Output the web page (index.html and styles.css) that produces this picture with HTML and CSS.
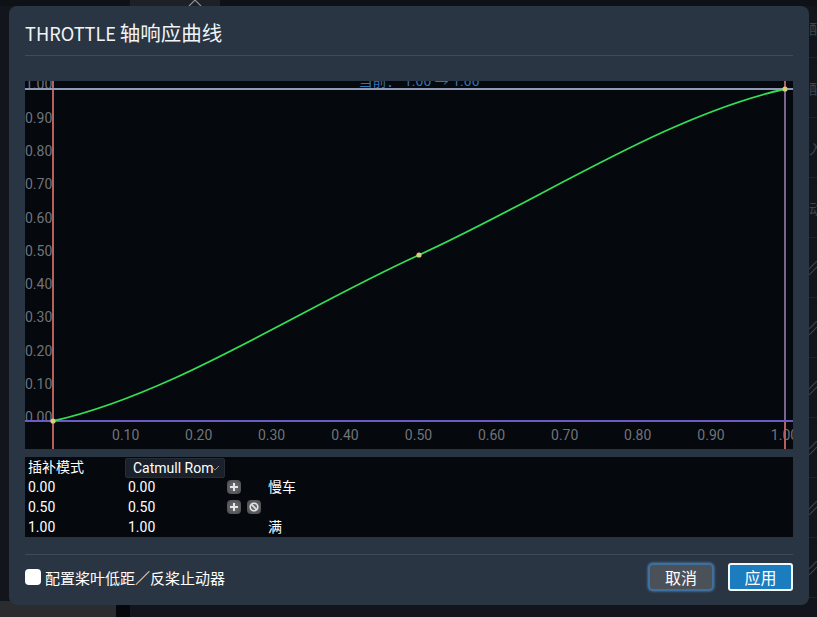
FILE: index.html
```html
<!DOCTYPE html>
<html lang="zh">
<head>
    <meta charset="UTF-8">
    <meta name="viewport" content="width=device-width, initial-scale=1.0">
    <title>THROTTLE 轴响应曲线</title>
    <link rel="stylesheet" href="styles.css">
</head>
<body>
    <div class="page">
        <div class="top-strip">
            <div class="top-tab">
                <svg class="caret" width="14" height="7" viewBox="0 0 14 7"><path d="M1 7 L7 1 L13 7" fill="none" stroke="#8b8f96" stroke-width="1.2"/></svg>
            </div>
        </div>
        <div class="side-rows">
            <div class="side-row"><span>配置</span></div>
            <div class="side-row"><span>配置</span></div>
            <div class="side-row"><span>入口</span></div>
            <div class="side-row"><span>动作</span></div>
            <div class="side-row"><svg width="10" height="14" viewBox="0 0 10 14"><path d="M0 8 L8 0 M0 14 L10 4" stroke="#3d4249" stroke-width="1.2"/></svg></div>
            <div class="side-row"><svg width="10" height="14" viewBox="0 0 10 14"><path d="M0 8 L8 0 M0 14 L10 4" stroke="#3d4249" stroke-width="1.2"/></svg></div>
            <div class="side-row"><svg width="10" height="14" viewBox="0 0 10 14"><path d="M0 8 L8 0 M0 14 L10 4" stroke="#3d4249" stroke-width="1.2"/></svg></div>
            <div class="side-row"><svg width="10" height="14" viewBox="0 0 10 14"><path d="M0 8 L8 0 M0 14 L10 4" stroke="#3d4249" stroke-width="1.2"/></svg></div>
            <div class="side-row"><svg width="10" height="14" viewBox="0 0 10 14"><path d="M0 8 L8 0 M0 14 L10 4" stroke="#3d4249" stroke-width="1.2"/></svg></div>
            <div class="side-row"><svg width="10" height="14" viewBox="0 0 10 14"><path d="M0 8 L8 0 M0 14 L10 4" stroke="#3d4249" stroke-width="1.2"/></svg></div>
        </div>
        <div class="bottom-left"></div>
        <div class="bottom-gap"></div>
    </div>

    <div class="modal">
        <div class="modal-title"><span class="title-axis">THROTTLE</span> 轴响应曲线</div>
        <div class="divider"></div>

        <svg class="plot" width="768" height="368" viewBox="25 81 768 368">
            <rect x="25" y="81" width="768" height="368" fill="#05080d"/>

            <g class="tick-y">
                <text x="25" y="89">1.00</text>
                <text x="25" y="123">0.90</text>
                <text x="25" y="156">0.80</text>
                <text x="25" y="189">0.70</text>
                <text x="25" y="223">0.60</text>
                <text x="25" y="256">0.50</text>
                <text x="25" y="289">0.40</text>
                <text x="25" y="322">0.30</text>
                <text x="25" y="356">0.20</text>
                <text x="25" y="389">0.10</text>
                <text x="25" y="422">0.00</text>
            </g>
            <g class="tick-x">
                <text x="125.7" y="440">0.10</text>
                <text x="198.7" y="440">0.20</text>
                <text x="271.6" y="440">0.30</text>
                <text x="345" y="440">0.40</text>
                <text x="418.5" y="440">0.50</text>
                <text x="491.6" y="440">0.60</text>
                <text x="564.7" y="440">0.70</text>
                <text x="637.7" y="440">0.80</text>
                <text x="711" y="440">0.90</text>
                <text x="784.5" y="440">1.00</text>
            </g>
            <text class="current" x="419" y="86">当前： 1.00 → 1.00</text>

            <path d="M53 81 V449" stroke="#b4605f" stroke-width="2"/>
            <path d="M785 81 V449" stroke="#b4605f" stroke-width="2"/>
            <path d="M785 89 V421" stroke="#7b6390" stroke-width="2"/>
            <path d="M25 89 H793" stroke="#8f9bb5" stroke-width="2"/>
            <path d="M25 421 H793" stroke="#6a5cc4" stroke-width="2"/>

            <path d="M53 421 C175 393.3 297 310.3 419 255 C541 199.7 663 116.7 785 89" fill="none" stroke="#33de55" stroke-width="1.8"/>

            <circle cx="53" cy="421" r="2.6" fill="#d8cf7c"/>
            <circle cx="419" cy="255" r="2.6" fill="#d8cf7c"/>
            <circle cx="785" cy="89" r="2.6" fill="#d8cf7c"/>
        </svg>

        <div class="points">
            <div class="cell">插补模式</div>
            <div class="select">Catmull Rom<svg class="chevron" width="8" height="6" viewBox="0 0 8 6"><path d="M1 3 L3 5 L7 1" fill="none" stroke="#8a8f96" stroke-width="1"/></svg></div>
            <div></div>
            <div></div>

            <div class="cell">0.00</div>
            <div class="cell">0.00</div>
            <div class="tools">
                <span class="tool"><svg width="10" height="10" viewBox="0 0 10 10"><path d="M5 1 V9 M1 5 H9" stroke="#e4e4e4" stroke-width="2"/></svg></span>
            </div>
            <div class="cell note">慢车</div>

            <div class="cell">0.50</div>
            <div class="cell">0.50</div>
            <div class="tools">
                <span class="tool"><svg width="10" height="10" viewBox="0 0 10 10"><path d="M5 1 V9 M1 5 H9" stroke="#e4e4e4" stroke-width="2"/></svg></span>
                <span class="tool"><svg width="10" height="10" viewBox="0 0 10 10"><circle cx="5" cy="5" r="3.8" fill="none" stroke="#e4e4e4" stroke-width="1.6"/><path d="M2.4 2.4 L7.6 7.6" stroke="#e4e4e4" stroke-width="1.6"/></svg></span>
            </div>
            <div></div>

            <div class="cell">1.00</div>
            <div class="cell">1.00</div>
            <div></div>
            <div class="cell note">满</div>
        </div>

        <div class="divider footer-line"></div>

        <div class="footer">
            <span class="checkbox"></span>
            <span class="check-label">配置桨叶低距／反桨止动器</span>
            <button class="btn btn-cancel">取消</button>
            <button class="btn btn-apply">应用</button>
        </div>
    </div>
</body>
</html>
```

FILE: styles.css
```css
html, body {
    margin: 0;
    height: 100%;
    overflow: hidden;
}
body {
    font-family: Roboto, "Noto Sans CJK SC", sans-serif;
    background-color: #05070b;
    color: #fff;
}
.page {
    position: relative;
    width: 817px;
    height: 617px;
    background-color: #12161c;
    overflow: hidden;
}
.top-strip {
    height: 6px;
    background-color: #0e1116;
}
.top-tab {
    width: 90px;
    height: 6px;
    margin-left: 130px;
    background-color: #1d2025;
    display: flex;
    justify-content: center;
}
.caret {
    margin-left: 40px;
    margin-top: -1px;
}
.side-rows {
    position: absolute;
    left: 809px;
    top: -2px;
    width: 8px;
    overflow: hidden;
}
.side-row {
    height: 59px;
    border-bottom: 1px solid #20242a;
    display: flex;
    align-items: center;
    font-size: 14px;
    color: #3f444b;
    white-space: nowrap;
}
.side-row svg {
    flex: none;
}
.bottom-left {
    position: absolute;
    left: 0;
    bottom: 0;
    width: 116px;
    height: 16px;
    background-color: #2a2c30;
}
.bottom-gap {
    position: absolute;
    left: 116px;
    bottom: 0;
    width: 14px;
    height: 16px;
    background-color: #05070c;
}

.modal {
    position: absolute;
    left: 9px;
    top: 6px;
    width: 768px;
    height: 567px;
    padding: 16px;
    border-radius: 8px;
    background-color: #2a3543;
}
.modal-title {
    font-family: "Noto Sans CJK SC", sans-serif;
    font-size: 20.5px;
    line-height: 21px;
    height: 22px;
    word-spacing: -1px;
    color: #f2f4f6;
    margin-bottom: 11px;
}
.title-axis {
    font-size: 18.2px;
    line-height: 20px;
}
.divider {
    height: 1px;
    background-color: #414b58;
}
.plot {
    display: block;
    margin-top: 25px;
}
.tick-y text, .tick-x text {
    font-size: 14px;
    fill: #6f747a;
}
.tick-x text {
    text-anchor: middle;
}
.current {
    font-size: 14px;
    fill: #2f74b5;
    text-anchor: middle;
}

.points {
    display: grid;
    grid-template-columns: 100px 100px 40px 1fr;
    grid-auto-rows: 20px;
    margin-top: 8px;
    background-color: #05080d;
    font-size: 14px;
}
.cell {
    padding-left: 3px;
    line-height: 20px;
    white-space: nowrap;
}
.note {
    padding-left: 3px;
}
.select {
    box-sizing: border-box;
    position: relative;
    height: 20px;
    margin-top: 1px;
    padding-left: 7px;
    line-height: 18px;
    background-color: #1a212b;
    border: 1px solid #262d37;
    border-radius: 2px;
    white-space: nowrap;
}
.chevron {
    position: absolute;
    right: 4px;
    top: 6px;
}
.tools {
    display: flex;
    align-items: center;
    gap: 6px;
    padding-left: 2px;
}
.tool {
    width: 14px;
    height: 14px;
    border-radius: 4px;
    background: radial-gradient(circle, #66686b 30%, #46484b 100%);
    display: flex;
    align-items: center;
    justify-content: center;
}

.footer-line {
    margin-top: 17px;
}
.footer {
    display: flex;
    align-items: center;
    margin-top: 8px;
    height: 28px;
}
.checkbox {
    width: 16px;
    height: 16px;
    border-radius: 4px;
    background-color: #fff;
    margin-right: 4px;
}
.check-label {
    font-size: 15px;
    flex: 1;
}
.btn {
    box-sizing: border-box;
    height: 28px;
    width: 66px;
    font-family: inherit;
    font-size: 16px;
    color: #fff;
    border-radius: 4px;
    padding: 0;
}
.btn-cancel {
    background-color: #4b5159;
    border: 2px solid #3f6f9c;
    box-shadow: 0 0 2px 1px rgba(79, 134, 184, 0.55);
    border-radius: 5px;
    margin-right: 14px;
}
.btn-apply {
    width: 65px;
    background-color: #1b7cc0;
    border: 2px solid #f4f8fb;
    border-radius: 3px;
}
```
